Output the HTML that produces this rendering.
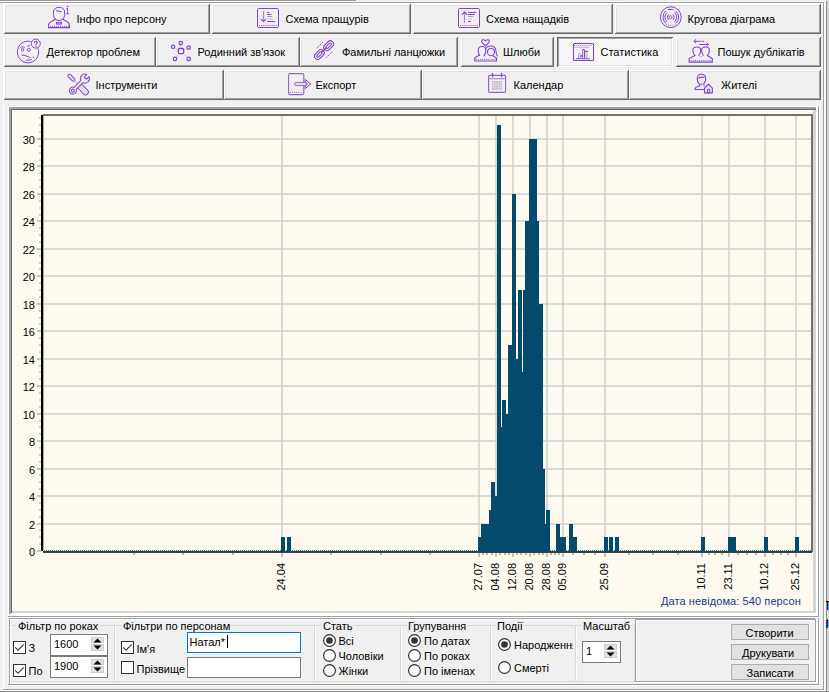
<!DOCTYPE html>
<html><head><meta charset="utf-8"><style>
html,body{margin:0;padding:0;}
body{width:829px;height:692px;overflow:hidden;position:relative;background:#f0f0f0;font-family:"Liberation Sans",sans-serif;font-size:11px;}
body>div, body>svg{position:absolute;}
.t{position:absolute;white-space:nowrap;line-height:12px;font-size:11px;color:#000;}
.b{position:absolute;background:#f0f0f0;box-shadow:inset -1px -1px #696969, inset 1px 1px #fff, inset -2px -2px #a0a0a0, inset 2px 2px #e3e3e3;}
.bs{position:absolute;background-color:#fff;background-image:linear-gradient(45deg,#f0f0f0 25%,transparent 25%,transparent 75%,#f0f0f0 75%),linear-gradient(45deg,#f0f0f0 25%,transparent 25%,transparent 75%,#f0f0f0 75%);background-size:2px 2px;background-position:0 0,1px 1px;box-shadow:inset 1px 1px #696969, inset -1px -1px #fff, inset 2px 2px #a0a0a0, inset -2px -2px #e3e3e3;}
.ic{position:absolute;overflow:visible;}
.cb{position:absolute;width:11px;height:11px;border:1px solid #333;background:#fff;}
.sp{position:absolute;border:1px solid #7a7a7a;background:#fff;}
.ed{position:absolute;border:1px solid #7a7a7a;background:#fff;}
.sb{position:absolute;background:#e1e1e1;box-sizing:border-box;border:1px solid #cfcfcf;}
.fb{position:absolute;background:#e1e1e1;border:1px solid #adadad;}
</style></head><body>
<div style="left:0px;top:0px;width:356px;height:1px;background:#9a9a9a;"></div>
<div style="left:356px;top:0px;width:473px;height:1px;background:#ececec;"></div>
<div style="left:0px;top:1px;width:829px;height:1px;background:#fafafa;"></div>
<div style="left:0px;top:2px;width:824px;height:1px;background:#a0a0a0;"></div>
<div style="left:3px;top:3px;width:821px;height:1px;background:#ffffff;"></div>
<div style="left:3px;top:3px;width:1px;height:688px;background:#ffffff;"></div>
<div style="left:823px;top:2px;width:1px;height:688px;background:#a0a0a0;"></div>
<div style="left:824px;top:2px;width:1px;height:689px;background:#ffffff;"></div>
<div style="left:826px;top:1px;width:1px;height:691px;background:#8c8c8c;"></div>
<div style="left:827px;top:0px;width:2px;height:692px;background:#d8d8d8;"></div>
<div style="left:3px;top:689px;width:821px;height:1px;background:#a0a0a0;"></div>
<div style="left:3px;top:690px;width:822px;height:1px;background:#ffffff;"></div>
<div style="left:0px;top:691px;width:829px;height:1px;background:#8c8c8c;"></div>
<div class="b" style="left:4px;top:4px;width:206px;height:30px"></div>
<svg class="ic" style="left:45px;top:4px" width="30" height="30" viewBox="0 0 30 30"><path d="M10.3 15 C9 13.8 8.5 12.5 8.5 10.5 L8.5 8 C8.5 5 11 3.3 14.2 3.3 C17.4 3.3 19.6 5 19.6 8 L19.6 10.5 C19.6 12.5 19 13.8 17.8 15 C16.7 16 15.4 16.4 14 16.4 C12.6 16.4 11.3 16 10.3 15 Z" fill="none" stroke="#8442d0" stroke-width="1.0" stroke-linecap="round" stroke-linejoin="round" /><path d="M11.5 6.8 L16.3 7.5" fill="none" stroke="#8442d0" stroke-width="1.1" stroke-linecap="round" stroke-linejoin="round" /><path d="M10.3 15.2 C8.5 16.5 5.8 17.3 4.3 19.2 C3.4 20.4 3.4 22 3.4 23.6 L24.6 23.6 C24.6 22 24.6 20.4 23.7 19.2 C22.2 17.3 19.5 16.5 17.8 15.2" fill="none" stroke="#8442d0" stroke-width="1.1" stroke-linecap="round" stroke-linejoin="round" /><rect x="11" y="17.8" width="6" height="2.8" fill="#8442d0"/><rect x="12.5" y="18.6" width="3" height="1.2" fill="#cdb5ef"/><rect x="5.2" y="21.9" width="0.9" height="1.7" fill="#8442d0"/><rect x="7.2" y="21.9" width="0.9" height="1.7" fill="#8442d0"/><rect x="9.2" y="21.9" width="0.9" height="1.7" fill="#8442d0"/><rect x="11.2" y="21.9" width="0.9" height="1.7" fill="#8442d0"/><rect x="13.2" y="21.9" width="0.9" height="1.7" fill="#8442d0"/><rect x="15.2" y="21.9" width="0.9" height="1.7" fill="#8442d0"/><rect x="17.2" y="21.9" width="0.9" height="1.7" fill="#8442d0"/><rect x="19.2" y="21.9" width="0.9" height="1.7" fill="#8442d0"/><rect x="21.2" y="21.9" width="0.9" height="1.7" fill="#8442d0"/><rect x="23.2" y="21.9" width="0.9" height="1.7" fill="#8442d0"/><circle cx="22.6" cy="2.5" r="0.7" fill="#8442d0"/><path d="M22.6 4.6 L22.6 9.6 M21.5 9.8 L23.7 9.8 M21.7 4.6 L22.6 4.6" fill="none" stroke="#8442d0" stroke-width="0.9" stroke-linecap="round" stroke-linejoin="round" /></svg>
<div class="t" style="left:76.5px;top:13px;color:#000;">Інфо про персону</div>
<div class="b" style="left:212px;top:4px;width:199px;height:30px"></div>
<svg class="ic" style="left:254px;top:5px" width="30" height="30" viewBox="0 0 30 30"><rect x="3.5" y="3.5" width="21" height="19" rx="1.2" fill="none" stroke="#8442d0" stroke-width="1"/><path d="M9.5 6.5 L9.5 16.5" fill="none" stroke="#a48ac8" stroke-width="1.2" stroke-linecap="round" stroke-linejoin="round" /><path d="M7.3 14.3 L9.5 16.6 L11.7 14.3" fill="none" stroke="#8442d0" stroke-width="1.2" stroke-linecap="round" stroke-linejoin="round" /><path d="M13.5 7.5 L15 7.5" fill="none" stroke="#8442d0" stroke-width="1.0" stroke-linecap="round" stroke-linejoin="round" /><path d="M13.5 9.5 L17 9.5" fill="none" stroke="#8442d0" stroke-width="1.0" stroke-linecap="round" stroke-linejoin="round" /><path d="M13.5 11.5 L18 11.5" fill="none" stroke="#b69ade" stroke-width="1.0" stroke-linecap="round" stroke-linejoin="round" /><path d="M13.5 14 L19 14" fill="none" stroke="#c8c0d4" stroke-width="1.0" stroke-linecap="round" stroke-linejoin="round" /><path d="M13.5 16.5 L20.5 16.5" fill="none" stroke="#8442d0" stroke-width="1.0" stroke-linecap="round" stroke-linejoin="round" /><circle cx="5.5" cy="20.5" r="0.6" fill="#8442d0"/><circle cx="7.6" cy="20.5" r="0.6" fill="#8442d0"/><circle cx="9.7" cy="20.5" r="0.6" fill="#8442d0"/><circle cx="11.799999999999999" cy="20.5" r="0.6" fill="#8442d0"/><circle cx="13.899999999999999" cy="20.5" r="0.6" fill="#8442d0"/><circle cx="15.999999999999998" cy="20.5" r="0.6" fill="#8442d0"/><circle cx="18.099999999999998" cy="20.5" r="0.6" fill="#8442d0"/><circle cx="20.2" cy="20.5" r="0.6" fill="#8442d0"/><circle cx="22.3" cy="20.5" r="0.6" fill="#8442d0"/></svg>
<div class="t" style="left:285.5px;top:13px;color:#000;">Схема пращурів</div>
<div class="b" style="left:413px;top:4px;width:200px;height:30px"></div>
<svg class="ic" style="left:454px;top:4px" width="30" height="30" viewBox="0 0 30 30"><rect x="4.5" y="4.5" width="21" height="19" rx="1.2" fill="none" stroke="#8442d0" stroke-width="1"/><path d="M10.5 8.5 L10.5 18.5" fill="none" stroke="#a48ac8" stroke-width="1.2" stroke-linecap="round" stroke-linejoin="round" /><path d="M8.2 10.4 L10.5 8 L12.8 10.4" fill="none" stroke="#8442d0" stroke-width="1.2" stroke-linecap="round" stroke-linejoin="round" /><path d="M14.5 8.5 L22 8.5" fill="none" stroke="#8442d0" stroke-width="1.0" stroke-linecap="round" stroke-linejoin="round" /><path d="M14.5 10.5 L20.5 10.5" fill="none" stroke="#8442d0" stroke-width="1.0" stroke-linecap="round" stroke-linejoin="round" /><path d="M14.5 12.5 L19 12.5" fill="none" stroke="#b69ade" stroke-width="1.0" stroke-linecap="round" stroke-linejoin="round" /><path d="M14.5 15 L17.5 15" fill="none" stroke="#c8c0d4" stroke-width="1.0" stroke-linecap="round" stroke-linejoin="round" /><path d="M14.5 17.5 L16.5 17.5" fill="none" stroke="#8442d0" stroke-width="1.0" stroke-linecap="round" stroke-linejoin="round" /><circle cx="6.5" cy="21.5" r="0.6" fill="#8442d0"/><circle cx="8.6" cy="21.5" r="0.6" fill="#8442d0"/><circle cx="10.7" cy="21.5" r="0.6" fill="#8442d0"/><circle cx="12.799999999999999" cy="21.5" r="0.6" fill="#8442d0"/><circle cx="14.899999999999999" cy="21.5" r="0.6" fill="#8442d0"/><circle cx="17.0" cy="21.5" r="0.6" fill="#8442d0"/><circle cx="19.1" cy="21.5" r="0.6" fill="#8442d0"/><circle cx="21.200000000000003" cy="21.5" r="0.6" fill="#8442d0"/><circle cx="23.300000000000004" cy="21.5" r="0.6" fill="#8442d0"/></svg>
<div class="t" style="left:486px;top:13px;color:#000;">Схема нащадків</div>
<div class="b" style="left:615px;top:4px;width:206px;height:30px"></div>
<svg class="ic" style="left:656px;top:4px" width="30" height="30" viewBox="0 0 30 30"><circle cx="14.8" cy="13.2" r="10.4" fill="none" stroke="#8442d0" stroke-width="1"/><path d="M12.3 5.499999999999999 L16.3 5.499999999999999" fill="none" stroke="#8442d0" stroke-width="1.1" stroke-linecap="round" stroke-linejoin="round" /><path d="M17.400000000000002 5.799999999999999 L18.1 6.1" fill="none" stroke="#b69ade" stroke-width="0.9" stroke-linecap="round" stroke-linejoin="round" /><path d="M9.4 7.299999999999999 A8 8 0 0 0 9.4 19.1" fill="none" stroke="#8442d0" stroke-width="1.0" stroke-linecap="round" stroke-linejoin="round" /><path d="M20.200000000000003 7.299999999999999 A8 8 0 0 1 20.200000000000003 19.1" fill="none" stroke="#8442d0" stroke-width="1.0" stroke-linecap="round" stroke-linejoin="round" /><path d="M10.600000000000001 8.899999999999999 A6 6 0 0 0 10.600000000000001 17.5" fill="none" stroke="#8442d0" stroke-width="1.0" stroke-linecap="round" stroke-linejoin="round" /><path d="M19.0 8.899999999999999 A6 6 0 0 1 19.0 17.5" fill="none" stroke="#8442d0" stroke-width="1.0" stroke-linecap="round" stroke-linejoin="round" /><path d="M12.3 10.799999999999999 A3.5 3.5 0 0 0 12.3 15.6" fill="none" stroke="#8442d0" stroke-width="1.0" stroke-linecap="round" stroke-linejoin="round" /><path d="M17.3 10.799999999999999 A3.5 3.5 0 0 1 17.3 15.6" fill="none" stroke="#8442d0" stroke-width="1.0" stroke-linecap="round" stroke-linejoin="round" /><circle cx="14.600000000000001" cy="13.2" r="1.5" fill="none" stroke="#8442d0" stroke-width="0.9"/><circle cx="10.5" cy="20.2" r="0.5" fill="#8442d0"/><circle cx="12.600000000000001" cy="21.2" r="0.5" fill="#8442d0"/><circle cx="14.8" cy="21.5" r="0.5" fill="#8442d0"/><circle cx="17.0" cy="21.2" r="0.5" fill="#8442d0"/><circle cx="19.1" cy="20.2" r="0.5" fill="#8442d0"/></svg>
<div class="t" style="left:687.5px;top:13px;color:#000;">Кругова діаграма</div>
<div class="b" style="left:4px;top:37px;width:152px;height:30px"></div>
<svg class="ic" style="left:14px;top:37px" width="30" height="30" viewBox="0 0 30 30"><path d="M16.6 4.4 C15.8 4.2 14.9 4.2 14 4.2 C8 4.2 3.4 9 3.4 15 C3.4 21 8 25.8 14 25.8 C20 25.8 24.6 21 24.6 15 C24.6 13.8 24.4 12.8 24.1 11.8" fill="none" stroke="#8442d0" stroke-width="1.0" stroke-linecap="round" stroke-linejoin="round" /><circle cx="21.8" cy="6.6" r="4.5" fill="none" stroke="#8442d0" stroke-width="1.0"/><path d="M20.5 5.4 C20.5 3.9 23.2 3.9 23.2 5.3 C23.2 6.3 21.9 6.6 21.9 7.9" fill="none" stroke="#8442d0" stroke-width="1.1" stroke-linecap="round" stroke-linejoin="round" /><circle cx="21.9" cy="9.6" r="0.6" fill="#8442d0"/><ellipse cx="8.5" cy="12.8" rx="1.1" ry="1.7" fill="none" stroke="#8442d0" stroke-width="0.9"/><ellipse cx="14.9" cy="12.8" rx="1.4" ry="1.7" fill="none" stroke="#8442d0" stroke-width="0.9"/><path d="M6.6 10.3 C7.5 9.6 9.5 9.6 10.4 10.3" fill="none" stroke="#8442d0" stroke-width="0.9" stroke-linecap="round" stroke-linejoin="round" /><path d="M13.4 9.4 L15.8 8.1" fill="none" stroke="#8442d0" stroke-width="0.9" stroke-linecap="round" stroke-linejoin="round" /><path d="M7.8 18 C10 18.2 12.5 18.8 14.5 19.8 L16.2 20.6" fill="none" stroke="#8442d0" stroke-width="1.0" stroke-linecap="round" stroke-linejoin="round" /><path d="M12.4 23.2 L16.3 22.9 L17.6 22.3" fill="none" stroke="#8442d0" stroke-width="1.0" stroke-linecap="round" stroke-linejoin="round" /><path d="M19.3 20.4 L19.6 20.1" fill="none" stroke="#8442d0" stroke-width="1.1" stroke-linecap="round" stroke-linejoin="round" /></svg>
<div class="t" style="left:46.5px;top:46px;color:#000;">Детектор проблем</div>
<div class="b" style="left:156px;top:37px;width:144px;height:30px"></div>
<svg class="ic" style="left:166px;top:38px" width="30" height="30" viewBox="0 0 30 30"><path d="M15 10.4 L14.8 6.8 M12.3 11.8 L8.6 9.6 M17.7 11.8 L21.1 10.2 M12.8 15.6 L10.2 19.3 M17.3 15.6 L21.3 19.5" fill="none" stroke="#c8c0d4" stroke-width="0.8" stroke-linecap="round" stroke-linejoin="round" /><rect x="12.4" y="10.5" width="5.2" height="5.2" rx="1.2" fill="none" stroke="#8442d0" stroke-width="1.3"/><circle cx="14.8" cy="5.1" r="1.7" fill="none" stroke="#8442d0" stroke-width="1.2"/><circle cx="7.1" cy="8.8" r="1.7" fill="none" stroke="#8442d0" stroke-width="1.2"/><circle cx="22.7" cy="9.6" r="1.7" fill="none" stroke="#8442d0" stroke-width="1.2"/><circle cx="9" cy="20.9" r="1.7" fill="none" stroke="#8442d0" stroke-width="1.2"/><circle cx="22.7" cy="20.9" r="1.7" fill="none" stroke="#8442d0" stroke-width="1.2"/></svg>
<div class="t" style="left:197.5px;top:46px;color:#000;">Родинний зв'язок</div>
<div class="b" style="left:300px;top:37px;width:158px;height:30px"></div>
<svg class="ic" style="left:310px;top:37px" width="30" height="30" viewBox="0 0 30 30"><g transform="rotate(-45 18.6 8.7)"><rect x="13.1" y="5.5" width="11" height="6.4" rx="3.2" fill="none" stroke="#8442d0" stroke-width="1.1"/><rect x="15.3" y="7.5" width="6.6" height="2.4" rx="1.2" fill="none" stroke="#8442d0" stroke-width="1.0"/></g><g transform="rotate(-45 9.4 17.5)"><rect x="3.9" y="14.3" width="11" height="6.4" rx="3.2" fill="none" stroke="#8442d0" stroke-width="1.1"/><rect x="6.1" y="16.3" width="6.6" height="2.4" rx="1.2" fill="none" stroke="#8442d0" stroke-width="1.0"/></g><path d="M11.6 15.2 L16.4 10.6" fill="none" stroke="#8442d0" stroke-width="1.3" stroke-linecap="round" stroke-linejoin="round" /><path d="M7 11 L7.4 10.6 M8.6 9.4 L9.1 8.9 M10.3 7.7 L10.8 7.2 M12 6 L12.5 5.5" fill="none" stroke="#8442d0" stroke-width="1.0" stroke-linecap="round" stroke-linejoin="round" /><path d="M16.4 20.5 L16.9 20 M18.1 18.9 L18.6 18.4 M19.8 17.2 L20.3 16.7 M21.6 15.6 L22.2 15" fill="none" stroke="#8442d0" stroke-width="1.0" stroke-linecap="round" stroke-linejoin="round" /></svg>
<div class="t" style="left:342px;top:46px;color:#000;">Фамильні ланцюжки</div>
<div class="b" style="left:461px;top:37px;width:93px;height:30px"></div>
<svg class="ic" style="left:472px;top:37px" width="30" height="30" viewBox="0 0 30 30"><path d="M13.5 9 L10.4 5.9 C9.3 4.7 9.5 3.1 11 2.8 C12.1 2.6 13 3.3 13.5 4.1 C14 3.3 14.9 2.6 16 2.8 C17.5 3.1 17.7 4.7 16.6 5.9 Z" fill="none" stroke="#8442d0" stroke-width="1.1" stroke-linecap="round" stroke-linejoin="round" /><path d="M7.6 18.5 C6.7 17.5 6.2 15.5 6.2 13.5 C6.2 11 7.5 9.5 10 9.5 C12.5 9.5 13.8 11 13.8 13.5 C13.8 15.5 13.2 17.3 12 18.8" fill="none" stroke="#8442d0" stroke-width="1.1" stroke-linecap="round" stroke-linejoin="round" /><path d="M15.5 15 C15.5 12.5 17 11.5 19 11.5 C21 11.5 22.5 12.5 22.5 15 C22.5 17 21 18.8 19 18.8 C17 18.8 15.5 17 15.5 15 Z" fill="none" stroke="#8442d0" stroke-width="1.1" stroke-linecap="round" stroke-linejoin="round" /><path d="M13.5 12 C14.5 9.5 17 9 19 9 C22 9 23.5 11 23.8 13.5 C24 16 24.5 18 25.5 19" fill="none" stroke="#8442d0" stroke-width="1.1" stroke-linecap="round" stroke-linejoin="round" /><path d="M7.5 18.3 C5.5 19.3 3.5 19.8 2.8 21 L2.8 24 L24.5 24 L24.5 21 C23.5 20.2 22.5 19.7 21.3 19" fill="none" stroke="#8442d0" stroke-width="1.2" stroke-linecap="round" stroke-linejoin="round" /><circle cx="4.5" cy="22.3" r="0.55" fill="#8442d0"/><circle cx="6.55" cy="22.3" r="0.55" fill="#8442d0"/><circle cx="8.6" cy="22.3" r="0.55" fill="#8442d0"/><circle cx="10.649999999999999" cy="22.3" r="0.55" fill="#8442d0"/><circle cx="12.7" cy="22.3" r="0.55" fill="#8442d0"/><circle cx="14.75" cy="22.3" r="0.55" fill="#8442d0"/><circle cx="16.8" cy="22.3" r="0.55" fill="#8442d0"/><circle cx="18.85" cy="22.3" r="0.55" fill="#8442d0"/><circle cx="20.900000000000002" cy="22.3" r="0.55" fill="#8442d0"/><circle cx="22.950000000000003" cy="22.3" r="0.55" fill="#8442d0"/></svg>
<div class="t" style="left:503px;top:46px;color:#000;">Шлюби</div>
<div class="bs" style="left:557px;top:37px;width:116px;height:30px"></div>
<svg class="ic" style="left:569px;top:38px" width="30" height="30" viewBox="0 0 30 30"><rect x="4.5" y="5.5" width="20" height="17" rx="1" fill="none" stroke="#8442d0" stroke-width="1.1"/><circle cx="5.5" cy="7.3" r="0.55" fill="#8442d0"/><circle cx="7.6" cy="7.3" r="0.55" fill="#8442d0"/><circle cx="9.7" cy="7.3" r="0.55" fill="#8442d0"/><circle cx="11.799999999999999" cy="7.3" r="0.55" fill="#8442d0"/><circle cx="13.899999999999999" cy="7.3" r="0.55" fill="#8442d0"/><circle cx="15.999999999999998" cy="7.3" r="0.55" fill="#8442d0"/><circle cx="18.099999999999998" cy="7.3" r="0.55" fill="#8442d0"/><circle cx="20.2" cy="7.3" r="0.55" fill="#8442d0"/><circle cx="22.3" cy="7.3" r="0.55" fill="#8442d0"/><path d="M5.5 9.2 L20 9.2" fill="none" stroke="#b69ade" stroke-width="0.9" stroke-linecap="round" stroke-linejoin="round" /><path d="M9.5 20 L9.5 15.8 C9.5 15 11.3 15 11.3 15.8 L11.3 20" fill="none" stroke="#b69ade" stroke-width="1.0" stroke-linecap="round" stroke-linejoin="round" /><path d="M13.7 20 L13.7 11.5 L15.5 11.5 L15.5 20" fill="none" stroke="#8442d0" stroke-width="1.0" stroke-linecap="round" stroke-linejoin="round" /><rect x="16.4" y="13.4" width="2.2" height="6.6" fill="#c8c0d4"/><path d="M16.4 13.4 L18.6 13.4" fill="none" stroke="#8442d0" stroke-width="1.0" stroke-linecap="round" stroke-linejoin="round" /><path d="M7.2 20.7 L20.5 20.7" fill="none" stroke="#8442d0" stroke-width="1.1" stroke-linecap="round" stroke-linejoin="round" /><rect x="11.5" y="17.2" width="1.6" height="1.6" fill="#8442d0"/></svg>
<div class="t" style="left:600.5px;top:46px;color:#000;">Статистика</div>
<div class="b" style="left:676px;top:37px;width:145px;height:30px"></div>
<svg class="ic" style="left:686px;top:37px" width="30" height="30" viewBox="0 0 30 30"><path d="M8.2 4.3 L14.5 4.3 M16 4.3 L17.7 4.3 M9.8 2.6 L8 4.3 L9.8 6" fill="none" stroke="#8442d0" stroke-width="1.0" stroke-linecap="round" stroke-linejoin="round" /><path d="M13.5 7.5 L22.3 7.5 M20.6 5.8 L22.3 7.5 L20.6 9.2" fill="none" stroke="#8442d0" stroke-width="1.0" stroke-linecap="round" stroke-linejoin="round" /><path d="M8.8 18.5 C7.5 17 6.9 15 6.9 13 C6.9 11 8.3 10 10.8 10 C13.3 10 14.7 11 14.7 13 C14.7 15 14 17 12.7 18.5" fill="none" stroke="#8442d0" stroke-width="1.1" stroke-linecap="round" stroke-linejoin="round" /><path d="M17.5 18.5 C16.3 17 15.6 15 15.6 13 C15.6 11 17 10 19.5 10 C22 10 23.4 11 23.4 13 C23.4 15 22.7 17 21.4 18.5" fill="none" stroke="#8442d0" stroke-width="1.1" stroke-linecap="round" stroke-linejoin="round" /><path d="M8.8 18.5 C7 19.5 4.8 20.2 3.2 21.6 L3.2 25.2 L26.3 25.2 L26.3 21.6 C24.7 20.2 23 19.5 21.4 18.5" fill="none" stroke="#8442d0" stroke-width="1.2" stroke-linecap="round" stroke-linejoin="round" /><path d="M12.7 18.5 C13.5 19.4 14.4 19.8 15.1 19.6 C16 19.3 16.8 18.8 17.5 18.5" fill="none" stroke="#b69ade" stroke-width="0.9" stroke-linecap="round" stroke-linejoin="round" /><circle cx="5.3" cy="23.6" r="0.55" fill="#8442d0"/><circle cx="7.4" cy="23.6" r="0.55" fill="#8442d0"/><circle cx="9.5" cy="23.6" r="0.55" fill="#8442d0"/><circle cx="11.6" cy="23.6" r="0.55" fill="#8442d0"/><circle cx="13.7" cy="23.6" r="0.55" fill="#8442d0"/><circle cx="15.799999999999999" cy="23.6" r="0.55" fill="#8442d0"/><circle cx="17.9" cy="23.6" r="0.55" fill="#8442d0"/><circle cx="20.0" cy="23.6" r="0.55" fill="#8442d0"/><circle cx="22.1" cy="23.6" r="0.55" fill="#8442d0"/><circle cx="24.200000000000003" cy="23.6" r="0.55" fill="#8442d0"/></svg>
<div class="t" style="left:717.5px;top:46px;color:#000;">Пошук дублікатів</div>
<div class="b" style="left:4px;top:70px;width:220px;height:30px"></div>
<svg class="ic" style="left:64px;top:70px" width="30" height="30" viewBox="0 0 30 30"><g transform="translate(14.2 14.6) rotate(45)"><rect x="-14" y="-1.5" width="8.5" height="3" rx="1.5" fill="none" stroke="#8442d0" stroke-width="1.0"/><path d="M-5.5 0 L1 0" stroke="#c8c0d4" stroke-width="1.6"/><rect x="1.5" y="-2.7" width="11.5" height="5.4" rx="2" fill="none" stroke="#8442d0" stroke-width="1.0"/><path d="M3.5 -1.8 L3.5 1.8" stroke="#c8c0d4" stroke-width="0.8"/><path d="M5.3 -1.8 L5.3 1.8" stroke="#c8c0d4" stroke-width="0.8"/><path d="M7.1 -1.8 L7.1 1.8" stroke="#c8c0d4" stroke-width="0.8"/><path d="M8.9 -1.8 L8.9 1.8" stroke="#c8c0d4" stroke-width="0.8"/><path d="M10.7 -1.8 L10.7 1.8" stroke="#c8c0d4" stroke-width="0.8"/></g><g transform="translate(8.9 20.6) rotate(-45)"><path d="M3.17 -1.5 L12.76 -1.5 A4.5 4.5 0 0 1 21.24 -1.5 L17.6 -1.5 L17.6 1.5 L21.24 1.5 A4.5 4.5 0 0 1 12.76 1.5 L3.17 1.5 A3.5 3.5 0 1 1 3.17 -1.5 Z" fill="#f0f0f0" stroke="#8442d0" stroke-width="1.0" stroke-linejoin="round"/><circle cx="0" cy="0" r="1.5" fill="none" stroke="#8442d0" stroke-width="1.0"/><path d="M4.5 0 L12 0" stroke="#c8c0d4" stroke-width="0.8" stroke-dasharray="1 1"/></g></svg>
<div class="t" style="left:95.5px;top:79px;color:#000;">Інструменти</div>
<div class="b" style="left:224px;top:70px;width:198px;height:30px"></div>
<svg class="ic" style="left:284px;top:70px" width="30" height="30" viewBox="0 0 30 30"><rect x="4.6" y="3.6" width="15.2" height="21" rx="1.5" fill="none" stroke="#9064c8" stroke-width="1.1"/><path d="M21.2 9.4 L26.6 14 L21.2 18.6 L21.2 16 L23.6 14 L21.2 12 Z" fill="#f0f0f0" stroke="#8442d0" stroke-width="1.0" stroke-linejoin="round"/><rect x="10.6" y="12.4" width="11.8" height="3.2" rx="1.6" fill="#f0f0f0" stroke="#9064c8" stroke-width="1.0"/><rect x="11.8" y="13.5" width="10" height="1.1" fill="#cfcfcf"/><circle cx="6.3" cy="22.3" r="0.55" fill="#8442d0"/><circle cx="8.4" cy="22.3" r="0.55" fill="#8442d0"/><circle cx="10.5" cy="22.3" r="0.55" fill="#8442d0"/><circle cx="12.6" cy="22.3" r="0.55" fill="#8442d0"/><circle cx="14.7" cy="22.3" r="0.55" fill="#8442d0"/><circle cx="16.8" cy="22.3" r="0.55" fill="#8442d0"/></svg>
<div class="t" style="left:315.5px;top:79px;color:#000;">Експорт</div>
<div class="b" style="left:422px;top:70px;width:207px;height:30px"></div>
<svg class="ic" style="left:482px;top:70px" width="30" height="30" viewBox="0 0 30 30"><rect x="6.6" y="5.4" width="17" height="17" rx="1.2" fill="none" stroke="#9062c8" stroke-width="1.1"/><path d="M10.5 3.5 L10.5 6.5 M19.5 3.5 L19.5 6.5" fill="none" stroke="#8442d0" stroke-width="1.3" stroke-linecap="round" stroke-linejoin="round" /><path d="M7.3 8.6 L23 8.6" fill="none" stroke="#a890c8" stroke-width="1.1" stroke-linecap="round" stroke-linejoin="round" /><rect x="10" y="11" width="10" height="8.8" fill="#cbc4cf"/><rect x="11.1" y="12.8" width="1" height="1" fill="#f4f2f6"/><rect x="11.1" y="15" width="1" height="1" fill="#f4f2f6"/><rect x="11.1" y="17.2" width="1" height="1" fill="#f4f2f6"/><rect x="13.3" y="12.8" width="1" height="1" fill="#f4f2f6"/><rect x="13.3" y="15" width="1" height="1" fill="#f4f2f6"/><rect x="13.3" y="17.2" width="1" height="1" fill="#f4f2f6"/><rect x="15.9" y="12.8" width="1" height="1" fill="#f4f2f6"/><rect x="15.9" y="15" width="1" height="1" fill="#f4f2f6"/><rect x="15.9" y="17.2" width="1" height="1" fill="#f4f2f6"/><rect x="18.1" y="12.8" width="1" height="1" fill="#f4f2f6"/><rect x="18.1" y="15" width="1" height="1" fill="#f4f2f6"/><rect x="18.1" y="17.2" width="1" height="1" fill="#f4f2f6"/></svg>
<div class="t" style="left:513.5px;top:79px;color:#000;">Календар</div>
<div class="b" style="left:629px;top:70px;width:192px;height:30px"></div>
<svg class="ic" style="left:690px;top:70px" width="30" height="30" viewBox="0 0 30 30"><path d="M8.8 13.3 C7.6 12.2 7.2 10.5 7.2 8.8 C7.2 5.8 9 4.2 11.5 4.2 C14 4.2 15.7 5.8 15.7 8.8 C15.7 10.5 15.2 12.2 14 13.3 C13.2 14 12.4 14.3 11.5 14.3 C10.5 14.3 9.6 14 8.8 13.3 Z" fill="none" stroke="#8442d0" stroke-width="1.1" stroke-linecap="round" stroke-linejoin="round" /><path d="M8.8 8.2 C10 7.3 12 7 14 7.3" fill="none" stroke="#8442d0" stroke-width="1.1" stroke-linecap="round" stroke-linejoin="round" /><circle cx="10.5" cy="11.3" r="0.45" fill="#c8c0d4"/><circle cx="12.8" cy="11.3" r="0.45" fill="#c8c0d4"/><path d="M9.5 14.5 L9.8 15.7 C8 16.5 6 17 5.3 18 L5.3 19.5 L13.5 19.5" fill="none" stroke="#8442d0" stroke-width="1.2" stroke-linecap="round" stroke-linejoin="round" /><path d="M14.2 15 L14 15.8" fill="none" stroke="#8442d0" stroke-width="1.1" stroke-linecap="round" stroke-linejoin="round" /><path d="M14.5 22.8 L14.5 18.2 L18.4 14.2 L22.3 18.2 L22.3 22.8 Z" fill="none" stroke="#8442d0" stroke-width="1.2" stroke-linecap="round" stroke-linejoin="round" /><rect x="17.4" y="19.4" width="2.2" height="3.4" fill="none" stroke="#8442d0" stroke-width="1"/></svg>
<div class="t" style="left:721px;top:79px;color:#000;">Жителі</div>
<div style="left:818px;top:106px;width:1px;height:579px;background:#a0a0a0;"></div>
<div style="left:819px;top:106px;width:1px;height:580px;background:#ffffff;"></div>
<div style="left:8px;top:616px;width:811px;height:1px;background:#a0a0a0;"></div>
<div style="left:8px;top:617px;width:811px;height:1px;background:#ffffff;"></div>
<div style="left:8px;top:684px;width:811px;height:1px;background:#a0a0a0;"></div>
<div style="left:8px;top:685px;width:812px;height:1px;background:#ffffff;"></div>
<div style="left:8px;top:106px;width:810px;height:1px;background:#ffffff;"></div>
<div style="left:8px;top:106px;width:1px;height:510px;background:#ffffff;"></div>
<div style="left:9px;top:107px;width:808px;height:2px;background:#a0a0a0;"></div>
<div style="left:9px;top:107px;width:2px;height:507px;background:#a0a0a0;"></div>
<div style="left:11px;top:109px;width:805px;height:1px;background:#696969;"></div>
<div style="left:11px;top:109px;width:1px;height:504px;background:#696969;"></div>
<div style="left:12px;top:110px;width:801px;height:1px;background:#ffffff;"></div>
<div style="left:12px;top:110px;width:1px;height:501px;background:#ffffff;"></div>
<div style="left:813px;top:110px;width:3px;height:503px;background:#d6d6d4;"></div>
<div style="left:12px;top:611px;width:804px;height:2px;background:#d6d6d4;"></div>
<div style="left:816px;top:107px;width:2px;height:509px;background:#ffffff;"></div>
<div style="left:11px;top:613px;width:807px;height:3px;background:#ffffff;"></div>
<svg style="position:absolute;left:0;top:0" width="829" height="692" shape-rendering="crispEdges">
<rect x="13" y="111" width="800" height="500" fill="#fefaf0"/>
<rect x="43" y="523" width="769" height="2" fill="#dcdad5"/>
<rect x="43" y="495" width="769" height="2" fill="#dcdad5"/>
<rect x="43" y="468" width="769" height="2" fill="#dcdad5"/>
<rect x="43" y="440" width="769" height="2" fill="#dcdad5"/>
<rect x="43" y="413" width="769" height="2" fill="#dcdad5"/>
<rect x="43" y="385" width="769" height="2" fill="#dcdad5"/>
<rect x="43" y="358" width="769" height="2" fill="#dcdad5"/>
<rect x="43" y="330" width="769" height="2" fill="#dcdad5"/>
<rect x="43" y="303" width="769" height="2" fill="#dcdad5"/>
<rect x="43" y="275" width="769" height="2" fill="#dcdad5"/>
<rect x="43" y="248" width="769" height="2" fill="#dcdad5"/>
<rect x="43" y="220" width="769" height="2" fill="#dcdad5"/>
<rect x="43" y="193" width="769" height="2" fill="#dcdad5"/>
<rect x="43" y="165" width="769" height="2" fill="#dcdad5"/>
<rect x="43" y="138" width="769" height="2" fill="#dcdad5"/>
<rect x="281" y="116" width="2" height="435" fill="#dcdad5"/>
<rect x="478" y="116" width="2" height="435" fill="#dcdad5"/>
<rect x="495" y="116" width="2" height="435" fill="#dcdad5"/>
<rect x="512" y="116" width="2" height="435" fill="#dcdad5"/>
<rect x="529" y="116" width="2" height="435" fill="#dcdad5"/>
<rect x="546" y="116" width="2" height="435" fill="#dcdad5"/>
<rect x="562" y="116" width="2" height="435" fill="#dcdad5"/>
<rect x="604" y="116" width="2" height="435" fill="#dcdad5"/>
<rect x="701" y="116" width="2" height="435" fill="#dcdad5"/>
<rect x="728" y="116" width="2" height="435" fill="#dcdad5"/>
<rect x="764" y="116" width="2" height="435" fill="#dcdad5"/>
<rect x="795" y="116" width="2" height="435" fill="#dcdad5"/>
<rect x="281" y="523" width="2" height="2" fill="#d3d1cc"/>
<rect x="478" y="523" width="2" height="2" fill="#d3d1cc"/>
<rect x="495" y="523" width="2" height="2" fill="#d3d1cc"/>
<rect x="512" y="523" width="2" height="2" fill="#d3d1cc"/>
<rect x="529" y="523" width="2" height="2" fill="#d3d1cc"/>
<rect x="546" y="523" width="2" height="2" fill="#d3d1cc"/>
<rect x="562" y="523" width="2" height="2" fill="#d3d1cc"/>
<rect x="604" y="523" width="2" height="2" fill="#d3d1cc"/>
<rect x="701" y="523" width="2" height="2" fill="#d3d1cc"/>
<rect x="728" y="523" width="2" height="2" fill="#d3d1cc"/>
<rect x="764" y="523" width="2" height="2" fill="#d3d1cc"/>
<rect x="795" y="523" width="2" height="2" fill="#d3d1cc"/>
<rect x="281" y="495" width="2" height="2" fill="#d3d1cc"/>
<rect x="478" y="495" width="2" height="2" fill="#d3d1cc"/>
<rect x="495" y="495" width="2" height="2" fill="#d3d1cc"/>
<rect x="512" y="495" width="2" height="2" fill="#d3d1cc"/>
<rect x="529" y="495" width="2" height="2" fill="#d3d1cc"/>
<rect x="546" y="495" width="2" height="2" fill="#d3d1cc"/>
<rect x="562" y="495" width="2" height="2" fill="#d3d1cc"/>
<rect x="604" y="495" width="2" height="2" fill="#d3d1cc"/>
<rect x="701" y="495" width="2" height="2" fill="#d3d1cc"/>
<rect x="728" y="495" width="2" height="2" fill="#d3d1cc"/>
<rect x="764" y="495" width="2" height="2" fill="#d3d1cc"/>
<rect x="795" y="495" width="2" height="2" fill="#d3d1cc"/>
<rect x="281" y="468" width="2" height="2" fill="#d3d1cc"/>
<rect x="478" y="468" width="2" height="2" fill="#d3d1cc"/>
<rect x="495" y="468" width="2" height="2" fill="#d3d1cc"/>
<rect x="512" y="468" width="2" height="2" fill="#d3d1cc"/>
<rect x="529" y="468" width="2" height="2" fill="#d3d1cc"/>
<rect x="546" y="468" width="2" height="2" fill="#d3d1cc"/>
<rect x="562" y="468" width="2" height="2" fill="#d3d1cc"/>
<rect x="604" y="468" width="2" height="2" fill="#d3d1cc"/>
<rect x="701" y="468" width="2" height="2" fill="#d3d1cc"/>
<rect x="728" y="468" width="2" height="2" fill="#d3d1cc"/>
<rect x="764" y="468" width="2" height="2" fill="#d3d1cc"/>
<rect x="795" y="468" width="2" height="2" fill="#d3d1cc"/>
<rect x="281" y="440" width="2" height="2" fill="#d3d1cc"/>
<rect x="478" y="440" width="2" height="2" fill="#d3d1cc"/>
<rect x="495" y="440" width="2" height="2" fill="#d3d1cc"/>
<rect x="512" y="440" width="2" height="2" fill="#d3d1cc"/>
<rect x="529" y="440" width="2" height="2" fill="#d3d1cc"/>
<rect x="546" y="440" width="2" height="2" fill="#d3d1cc"/>
<rect x="562" y="440" width="2" height="2" fill="#d3d1cc"/>
<rect x="604" y="440" width="2" height="2" fill="#d3d1cc"/>
<rect x="701" y="440" width="2" height="2" fill="#d3d1cc"/>
<rect x="728" y="440" width="2" height="2" fill="#d3d1cc"/>
<rect x="764" y="440" width="2" height="2" fill="#d3d1cc"/>
<rect x="795" y="440" width="2" height="2" fill="#d3d1cc"/>
<rect x="281" y="413" width="2" height="2" fill="#d3d1cc"/>
<rect x="478" y="413" width="2" height="2" fill="#d3d1cc"/>
<rect x="495" y="413" width="2" height="2" fill="#d3d1cc"/>
<rect x="512" y="413" width="2" height="2" fill="#d3d1cc"/>
<rect x="529" y="413" width="2" height="2" fill="#d3d1cc"/>
<rect x="546" y="413" width="2" height="2" fill="#d3d1cc"/>
<rect x="562" y="413" width="2" height="2" fill="#d3d1cc"/>
<rect x="604" y="413" width="2" height="2" fill="#d3d1cc"/>
<rect x="701" y="413" width="2" height="2" fill="#d3d1cc"/>
<rect x="728" y="413" width="2" height="2" fill="#d3d1cc"/>
<rect x="764" y="413" width="2" height="2" fill="#d3d1cc"/>
<rect x="795" y="413" width="2" height="2" fill="#d3d1cc"/>
<rect x="281" y="385" width="2" height="2" fill="#d3d1cc"/>
<rect x="478" y="385" width="2" height="2" fill="#d3d1cc"/>
<rect x="495" y="385" width="2" height="2" fill="#d3d1cc"/>
<rect x="512" y="385" width="2" height="2" fill="#d3d1cc"/>
<rect x="529" y="385" width="2" height="2" fill="#d3d1cc"/>
<rect x="546" y="385" width="2" height="2" fill="#d3d1cc"/>
<rect x="562" y="385" width="2" height="2" fill="#d3d1cc"/>
<rect x="604" y="385" width="2" height="2" fill="#d3d1cc"/>
<rect x="701" y="385" width="2" height="2" fill="#d3d1cc"/>
<rect x="728" y="385" width="2" height="2" fill="#d3d1cc"/>
<rect x="764" y="385" width="2" height="2" fill="#d3d1cc"/>
<rect x="795" y="385" width="2" height="2" fill="#d3d1cc"/>
<rect x="281" y="358" width="2" height="2" fill="#d3d1cc"/>
<rect x="478" y="358" width="2" height="2" fill="#d3d1cc"/>
<rect x="495" y="358" width="2" height="2" fill="#d3d1cc"/>
<rect x="512" y="358" width="2" height="2" fill="#d3d1cc"/>
<rect x="529" y="358" width="2" height="2" fill="#d3d1cc"/>
<rect x="546" y="358" width="2" height="2" fill="#d3d1cc"/>
<rect x="562" y="358" width="2" height="2" fill="#d3d1cc"/>
<rect x="604" y="358" width="2" height="2" fill="#d3d1cc"/>
<rect x="701" y="358" width="2" height="2" fill="#d3d1cc"/>
<rect x="728" y="358" width="2" height="2" fill="#d3d1cc"/>
<rect x="764" y="358" width="2" height="2" fill="#d3d1cc"/>
<rect x="795" y="358" width="2" height="2" fill="#d3d1cc"/>
<rect x="281" y="330" width="2" height="2" fill="#d3d1cc"/>
<rect x="478" y="330" width="2" height="2" fill="#d3d1cc"/>
<rect x="495" y="330" width="2" height="2" fill="#d3d1cc"/>
<rect x="512" y="330" width="2" height="2" fill="#d3d1cc"/>
<rect x="529" y="330" width="2" height="2" fill="#d3d1cc"/>
<rect x="546" y="330" width="2" height="2" fill="#d3d1cc"/>
<rect x="562" y="330" width="2" height="2" fill="#d3d1cc"/>
<rect x="604" y="330" width="2" height="2" fill="#d3d1cc"/>
<rect x="701" y="330" width="2" height="2" fill="#d3d1cc"/>
<rect x="728" y="330" width="2" height="2" fill="#d3d1cc"/>
<rect x="764" y="330" width="2" height="2" fill="#d3d1cc"/>
<rect x="795" y="330" width="2" height="2" fill="#d3d1cc"/>
<rect x="281" y="303" width="2" height="2" fill="#d3d1cc"/>
<rect x="478" y="303" width="2" height="2" fill="#d3d1cc"/>
<rect x="495" y="303" width="2" height="2" fill="#d3d1cc"/>
<rect x="512" y="303" width="2" height="2" fill="#d3d1cc"/>
<rect x="529" y="303" width="2" height="2" fill="#d3d1cc"/>
<rect x="546" y="303" width="2" height="2" fill="#d3d1cc"/>
<rect x="562" y="303" width="2" height="2" fill="#d3d1cc"/>
<rect x="604" y="303" width="2" height="2" fill="#d3d1cc"/>
<rect x="701" y="303" width="2" height="2" fill="#d3d1cc"/>
<rect x="728" y="303" width="2" height="2" fill="#d3d1cc"/>
<rect x="764" y="303" width="2" height="2" fill="#d3d1cc"/>
<rect x="795" y="303" width="2" height="2" fill="#d3d1cc"/>
<rect x="281" y="275" width="2" height="2" fill="#d3d1cc"/>
<rect x="478" y="275" width="2" height="2" fill="#d3d1cc"/>
<rect x="495" y="275" width="2" height="2" fill="#d3d1cc"/>
<rect x="512" y="275" width="2" height="2" fill="#d3d1cc"/>
<rect x="529" y="275" width="2" height="2" fill="#d3d1cc"/>
<rect x="546" y="275" width="2" height="2" fill="#d3d1cc"/>
<rect x="562" y="275" width="2" height="2" fill="#d3d1cc"/>
<rect x="604" y="275" width="2" height="2" fill="#d3d1cc"/>
<rect x="701" y="275" width="2" height="2" fill="#d3d1cc"/>
<rect x="728" y="275" width="2" height="2" fill="#d3d1cc"/>
<rect x="764" y="275" width="2" height="2" fill="#d3d1cc"/>
<rect x="795" y="275" width="2" height="2" fill="#d3d1cc"/>
<rect x="281" y="248" width="2" height="2" fill="#d3d1cc"/>
<rect x="478" y="248" width="2" height="2" fill="#d3d1cc"/>
<rect x="495" y="248" width="2" height="2" fill="#d3d1cc"/>
<rect x="512" y="248" width="2" height="2" fill="#d3d1cc"/>
<rect x="529" y="248" width="2" height="2" fill="#d3d1cc"/>
<rect x="546" y="248" width="2" height="2" fill="#d3d1cc"/>
<rect x="562" y="248" width="2" height="2" fill="#d3d1cc"/>
<rect x="604" y="248" width="2" height="2" fill="#d3d1cc"/>
<rect x="701" y="248" width="2" height="2" fill="#d3d1cc"/>
<rect x="728" y="248" width="2" height="2" fill="#d3d1cc"/>
<rect x="764" y="248" width="2" height="2" fill="#d3d1cc"/>
<rect x="795" y="248" width="2" height="2" fill="#d3d1cc"/>
<rect x="281" y="220" width="2" height="2" fill="#d3d1cc"/>
<rect x="478" y="220" width="2" height="2" fill="#d3d1cc"/>
<rect x="495" y="220" width="2" height="2" fill="#d3d1cc"/>
<rect x="512" y="220" width="2" height="2" fill="#d3d1cc"/>
<rect x="529" y="220" width="2" height="2" fill="#d3d1cc"/>
<rect x="546" y="220" width="2" height="2" fill="#d3d1cc"/>
<rect x="562" y="220" width="2" height="2" fill="#d3d1cc"/>
<rect x="604" y="220" width="2" height="2" fill="#d3d1cc"/>
<rect x="701" y="220" width="2" height="2" fill="#d3d1cc"/>
<rect x="728" y="220" width="2" height="2" fill="#d3d1cc"/>
<rect x="764" y="220" width="2" height="2" fill="#d3d1cc"/>
<rect x="795" y="220" width="2" height="2" fill="#d3d1cc"/>
<rect x="281" y="193" width="2" height="2" fill="#d3d1cc"/>
<rect x="478" y="193" width="2" height="2" fill="#d3d1cc"/>
<rect x="495" y="193" width="2" height="2" fill="#d3d1cc"/>
<rect x="512" y="193" width="2" height="2" fill="#d3d1cc"/>
<rect x="529" y="193" width="2" height="2" fill="#d3d1cc"/>
<rect x="546" y="193" width="2" height="2" fill="#d3d1cc"/>
<rect x="562" y="193" width="2" height="2" fill="#d3d1cc"/>
<rect x="604" y="193" width="2" height="2" fill="#d3d1cc"/>
<rect x="701" y="193" width="2" height="2" fill="#d3d1cc"/>
<rect x="728" y="193" width="2" height="2" fill="#d3d1cc"/>
<rect x="764" y="193" width="2" height="2" fill="#d3d1cc"/>
<rect x="795" y="193" width="2" height="2" fill="#d3d1cc"/>
<rect x="281" y="165" width="2" height="2" fill="#d3d1cc"/>
<rect x="478" y="165" width="2" height="2" fill="#d3d1cc"/>
<rect x="495" y="165" width="2" height="2" fill="#d3d1cc"/>
<rect x="512" y="165" width="2" height="2" fill="#d3d1cc"/>
<rect x="529" y="165" width="2" height="2" fill="#d3d1cc"/>
<rect x="546" y="165" width="2" height="2" fill="#d3d1cc"/>
<rect x="562" y="165" width="2" height="2" fill="#d3d1cc"/>
<rect x="604" y="165" width="2" height="2" fill="#d3d1cc"/>
<rect x="701" y="165" width="2" height="2" fill="#d3d1cc"/>
<rect x="728" y="165" width="2" height="2" fill="#d3d1cc"/>
<rect x="764" y="165" width="2" height="2" fill="#d3d1cc"/>
<rect x="795" y="165" width="2" height="2" fill="#d3d1cc"/>
<rect x="281" y="138" width="2" height="2" fill="#d3d1cc"/>
<rect x="478" y="138" width="2" height="2" fill="#d3d1cc"/>
<rect x="495" y="138" width="2" height="2" fill="#d3d1cc"/>
<rect x="512" y="138" width="2" height="2" fill="#d3d1cc"/>
<rect x="529" y="138" width="2" height="2" fill="#d3d1cc"/>
<rect x="546" y="138" width="2" height="2" fill="#d3d1cc"/>
<rect x="562" y="138" width="2" height="2" fill="#d3d1cc"/>
<rect x="604" y="138" width="2" height="2" fill="#d3d1cc"/>
<rect x="701" y="138" width="2" height="2" fill="#d3d1cc"/>
<rect x="728" y="138" width="2" height="2" fill="#d3d1cc"/>
<rect x="764" y="138" width="2" height="2" fill="#d3d1cc"/>
<rect x="795" y="138" width="2" height="2" fill="#d3d1cc"/>
<rect x="43" y="114" width="770" height="2" fill="#727270"/>
<rect x="811" y="114" width="2" height="438" fill="#727270"/>
<rect x="281" y="537" width="4" height="14" fill="#034a6d"/>
<rect x="287" y="537" width="4" height="14" fill="#034a6d"/>
<rect x="478" y="537" width="3" height="14" fill="#034a6d"/>
<rect x="481" y="524" width="8" height="27" fill="#034a6d"/>
<rect x="489" y="510" width="2" height="41" fill="#034a6d"/>
<rect x="491" y="482" width="4" height="69" fill="#034a6d"/>
<rect x="495" y="496" width="2" height="55" fill="#034a6d"/>
<rect x="497" y="125" width="4" height="426" fill="#034a6d"/>
<rect x="501" y="427" width="1" height="124" fill="#034a6d"/>
<rect x="502" y="400" width="4" height="151" fill="#034a6d"/>
<rect x="506" y="414" width="2" height="137" fill="#034a6d"/>
<rect x="508" y="345" width="4" height="206" fill="#034a6d"/>
<rect x="512" y="194" width="4" height="357" fill="#034a6d"/>
<rect x="516" y="359" width="2" height="192" fill="#034a6d"/>
<rect x="518" y="290" width="4" height="261" fill="#034a6d"/>
<rect x="522" y="372" width="1" height="179" fill="#034a6d"/>
<rect x="523" y="290" width="2" height="261" fill="#034a6d"/>
<rect x="525" y="221" width="4" height="330" fill="#034a6d"/>
<rect x="529" y="139" width="8" height="412" fill="#034a6d"/>
<rect x="537" y="221" width="2" height="330" fill="#034a6d"/>
<rect x="539" y="304" width="4" height="247" fill="#034a6d"/>
<rect x="543" y="469" width="2" height="82" fill="#034a6d"/>
<rect x="545" y="524" width="1" height="27" fill="#034a6d"/>
<rect x="546" y="510" width="4" height="41" fill="#034a6d"/>
<rect x="556" y="524" width="4" height="27" fill="#034a6d"/>
<rect x="560" y="537" width="6" height="14" fill="#034a6d"/>
<rect x="569" y="524" width="4" height="27" fill="#034a6d"/>
<rect x="573" y="537" width="4" height="14" fill="#034a6d"/>
<rect x="604" y="537" width="4" height="14" fill="#034a6d"/>
<rect x="609" y="537" width="4" height="14" fill="#034a6d"/>
<rect x="615" y="537" width="4" height="14" fill="#034a6d"/>
<rect x="701" y="537" width="4" height="14" fill="#034a6d"/>
<rect x="728" y="537" width="8" height="14" fill="#034a6d"/>
<rect x="764" y="537" width="4" height="14" fill="#034a6d"/>
<rect x="795" y="537" width="4" height="14" fill="#034a6d"/>
<rect x="43" y="551" width="769" height="1" fill="#034a6d"/>
<rect x="43" y="552" width="769" height="1" fill="#4a4038"/>
<pattern id="dots" x="0" y="0" width="2" height="1" patternUnits="userSpaceOnUse"><rect x="0" y="0" width="1" height="1" fill="#6a6a64"/></pattern>
<rect x="43" y="550" width="238" height="1" fill="url(#dots)"/>
<rect x="285" y="550" width="2" height="1" fill="url(#dots)"/>
<rect x="291" y="550" width="187" height="1" fill="url(#dots)"/>
<rect x="550" y="550" width="6" height="1" fill="url(#dots)"/>
<rect x="566" y="550" width="3" height="1" fill="url(#dots)"/>
<rect x="577" y="550" width="27" height="1" fill="url(#dots)"/>
<rect x="608" y="550" width="1" height="1" fill="url(#dots)"/>
<rect x="613" y="550" width="2" height="1" fill="url(#dots)"/>
<rect x="619" y="550" width="82" height="1" fill="url(#dots)"/>
<rect x="705" y="550" width="23" height="1" fill="url(#dots)"/>
<rect x="736" y="550" width="28" height="1" fill="url(#dots)"/>
<rect x="768" y="550" width="27" height="1" fill="url(#dots)"/>
<rect x="799" y="550" width="13" height="1" fill="url(#dots)"/>
<rect x="41" y="115" width="2" height="436" fill="#000"/>
<rect x="43" y="116" width="1" height="434" fill="#a8a8a4"/>
<rect x="37" y="550" width="4" height="2" fill="#c4c4c0"/>
<rect x="39" y="543" width="2" height="2" fill="#cdcdc8"/>
<rect x="39" y="536" width="2" height="2" fill="#cdcdc8"/>
<rect x="39" y="529" width="2" height="2" fill="#cdcdc8"/>
<rect x="37" y="523" width="4" height="2" fill="#c4c4c0"/>
<rect x="39" y="516" width="2" height="2" fill="#cdcdc8"/>
<rect x="39" y="509" width="2" height="2" fill="#cdcdc8"/>
<rect x="39" y="502" width="2" height="2" fill="#cdcdc8"/>
<rect x="37" y="495" width="4" height="2" fill="#c4c4c0"/>
<rect x="39" y="488" width="2" height="2" fill="#cdcdc8"/>
<rect x="39" y="481" width="2" height="2" fill="#cdcdc8"/>
<rect x="39" y="474" width="2" height="2" fill="#cdcdc8"/>
<rect x="37" y="468" width="4" height="2" fill="#c4c4c0"/>
<rect x="39" y="461" width="2" height="2" fill="#cdcdc8"/>
<rect x="39" y="454" width="2" height="2" fill="#cdcdc8"/>
<rect x="39" y="447" width="2" height="2" fill="#cdcdc8"/>
<rect x="37" y="440" width="4" height="2" fill="#c4c4c0"/>
<rect x="39" y="433" width="2" height="2" fill="#cdcdc8"/>
<rect x="39" y="426" width="2" height="2" fill="#cdcdc8"/>
<rect x="39" y="420" width="2" height="2" fill="#cdcdc8"/>
<rect x="37" y="413" width="4" height="2" fill="#c4c4c0"/>
<rect x="39" y="406" width="2" height="2" fill="#cdcdc8"/>
<rect x="39" y="399" width="2" height="2" fill="#cdcdc8"/>
<rect x="39" y="392" width="2" height="2" fill="#cdcdc8"/>
<rect x="37" y="385" width="4" height="2" fill="#c4c4c0"/>
<rect x="39" y="378" width="2" height="2" fill="#cdcdc8"/>
<rect x="39" y="371" width="2" height="2" fill="#cdcdc8"/>
<rect x="39" y="365" width="2" height="2" fill="#cdcdc8"/>
<rect x="37" y="358" width="4" height="2" fill="#c4c4c0"/>
<rect x="39" y="351" width="2" height="2" fill="#cdcdc8"/>
<rect x="39" y="344" width="2" height="2" fill="#cdcdc8"/>
<rect x="39" y="337" width="2" height="2" fill="#cdcdc8"/>
<rect x="37" y="330" width="4" height="2" fill="#c4c4c0"/>
<rect x="39" y="323" width="2" height="2" fill="#cdcdc8"/>
<rect x="39" y="317" width="2" height="2" fill="#cdcdc8"/>
<rect x="39" y="310" width="2" height="2" fill="#cdcdc8"/>
<rect x="37" y="303" width="4" height="2" fill="#c4c4c0"/>
<rect x="39" y="296" width="2" height="2" fill="#cdcdc8"/>
<rect x="39" y="289" width="2" height="2" fill="#cdcdc8"/>
<rect x="39" y="282" width="2" height="2" fill="#cdcdc8"/>
<rect x="37" y="275" width="4" height="2" fill="#c4c4c0"/>
<rect x="39" y="268" width="2" height="2" fill="#cdcdc8"/>
<rect x="39" y="262" width="2" height="2" fill="#cdcdc8"/>
<rect x="39" y="255" width="2" height="2" fill="#cdcdc8"/>
<rect x="37" y="248" width="4" height="2" fill="#c4c4c0"/>
<rect x="39" y="241" width="2" height="2" fill="#cdcdc8"/>
<rect x="39" y="234" width="2" height="2" fill="#cdcdc8"/>
<rect x="39" y="227" width="2" height="2" fill="#cdcdc8"/>
<rect x="37" y="220" width="4" height="2" fill="#c4c4c0"/>
<rect x="39" y="214" width="2" height="2" fill="#cdcdc8"/>
<rect x="39" y="207" width="2" height="2" fill="#cdcdc8"/>
<rect x="39" y="200" width="2" height="2" fill="#cdcdc8"/>
<rect x="37" y="193" width="4" height="2" fill="#c4c4c0"/>
<rect x="39" y="186" width="2" height="2" fill="#cdcdc8"/>
<rect x="39" y="179" width="2" height="2" fill="#cdcdc8"/>
<rect x="39" y="172" width="2" height="2" fill="#cdcdc8"/>
<rect x="37" y="165" width="4" height="2" fill="#c4c4c0"/>
<rect x="39" y="159" width="2" height="2" fill="#cdcdc8"/>
<rect x="39" y="152" width="2" height="2" fill="#cdcdc8"/>
<rect x="39" y="145" width="2" height="2" fill="#cdcdc8"/>
<rect x="37" y="138" width="4" height="2" fill="#c4c4c0"/>
<rect x="39" y="131" width="2" height="2" fill="#cdcdc8"/>
<rect x="39" y="124" width="2" height="2" fill="#cdcdc8"/>
<rect x="39" y="117" width="2" height="2" fill="#cdcdc8"/>
<rect x="281" y="553" width="2" height="4" fill="#c4c4c0"/>
<rect x="478" y="553" width="2" height="4" fill="#c4c4c0"/>
<rect x="495" y="553" width="2" height="4" fill="#c4c4c0"/>
<rect x="512" y="553" width="2" height="4" fill="#c4c4c0"/>
<rect x="529" y="553" width="2" height="4" fill="#c4c4c0"/>
<rect x="546" y="553" width="2" height="4" fill="#c4c4c0"/>
<rect x="562" y="553" width="2" height="4" fill="#c4c4c0"/>
<rect x="604" y="553" width="2" height="4" fill="#c4c4c0"/>
<rect x="701" y="553" width="2" height="4" fill="#c4c4c0"/>
<rect x="728" y="553" width="2" height="4" fill="#c4c4c0"/>
<rect x="764" y="553" width="2" height="4" fill="#c4c4c0"/>
<rect x="795" y="553" width="2" height="4" fill="#c4c4c0"/>
<rect x="133" y="553" width="2" height="2" fill="#b8b8b4"/>
<rect x="182" y="553" width="2" height="2" fill="#b8b8b4"/>
<rect x="232" y="553" width="2" height="2" fill="#b8b8b4"/>
<rect x="330" y="553" width="2" height="2" fill="#b8b8b4"/>
<rect x="380" y="553" width="2" height="2" fill="#b8b8b4"/>
<rect x="429" y="553" width="2" height="2" fill="#b8b8b4"/>
<rect x="482" y="553" width="2" height="2" fill="#b8b8b4"/>
<rect x="486" y="553" width="2" height="2" fill="#b8b8b4"/>
<rect x="491" y="553" width="2" height="2" fill="#b8b8b4"/>
<rect x="499" y="553" width="2" height="2" fill="#b8b8b4"/>
<rect x="504" y="553" width="2" height="2" fill="#b8b8b4"/>
<rect x="508" y="553" width="2" height="2" fill="#b8b8b4"/>
<rect x="516" y="553" width="2" height="2" fill="#b8b8b4"/>
<rect x="520" y="553" width="2" height="2" fill="#b8b8b4"/>
<rect x="525" y="553" width="2" height="2" fill="#b8b8b4"/>
<rect x="533" y="553" width="2" height="2" fill="#b8b8b4"/>
<rect x="538" y="553" width="2" height="2" fill="#b8b8b4"/>
<rect x="542" y="553" width="2" height="2" fill="#b8b8b4"/>
<rect x="550" y="553" width="2" height="2" fill="#b8b8b4"/>
<rect x="554" y="553" width="2" height="2" fill="#b8b8b4"/>
<rect x="558" y="553" width="2" height="2" fill="#b8b8b4"/>
<rect x="572" y="553" width="2" height="2" fill="#b8b8b4"/>
<rect x="583" y="553" width="2" height="2" fill="#b8b8b4"/>
<rect x="594" y="553" width="2" height="2" fill="#b8b8b4"/>
<rect x="628" y="553" width="2" height="2" fill="#b8b8b4"/>
<rect x="652" y="553" width="2" height="2" fill="#b8b8b4"/>
<rect x="677" y="553" width="2" height="2" fill="#b8b8b4"/>
<rect x="708" y="553" width="2" height="2" fill="#b8b8b4"/>
<rect x="714" y="553" width="2" height="2" fill="#b8b8b4"/>
<rect x="721" y="553" width="2" height="2" fill="#b8b8b4"/>
<rect x="737" y="553" width="2" height="2" fill="#b8b8b4"/>
<rect x="746" y="553" width="2" height="2" fill="#b8b8b4"/>
<rect x="755" y="553" width="2" height="2" fill="#b8b8b4"/>
<rect x="772" y="553" width="2" height="2" fill="#b8b8b4"/>
<rect x="780" y="553" width="2" height="2" fill="#b8b8b4"/>
<rect x="787" y="553" width="2" height="2" fill="#b8b8b4"/>
</svg>
<div class="t" style="left:0px;width:35px;text-align:right;top:546px">0</div>
<div class="t" style="left:0px;width:35px;text-align:right;top:519px">2</div>
<div class="t" style="left:0px;width:35px;text-align:right;top:491px">4</div>
<div class="t" style="left:0px;width:35px;text-align:right;top:464px">6</div>
<div class="t" style="left:0px;width:35px;text-align:right;top:436px">8</div>
<div class="t" style="left:0px;width:35px;text-align:right;top:409px">10</div>
<div class="t" style="left:0px;width:35px;text-align:right;top:381px">12</div>
<div class="t" style="left:0px;width:35px;text-align:right;top:354px">14</div>
<div class="t" style="left:0px;width:35px;text-align:right;top:326px">16</div>
<div class="t" style="left:0px;width:35px;text-align:right;top:299px">18</div>
<div class="t" style="left:0px;width:35px;text-align:right;top:271px">20</div>
<div class="t" style="left:0px;width:35px;text-align:right;top:244px">22</div>
<div class="t" style="left:0px;width:35px;text-align:right;top:216px">24</div>
<div class="t" style="left:0px;width:35px;text-align:right;top:189px">26</div>
<div class="t" style="left:0px;width:35px;text-align:right;top:161px">28</div>
<div class="t" style="left:0px;width:35px;text-align:right;top:134px">30</div>
<div class="t rot" style="left:241.2px;top:557px;width:40px;text-align:right;transform-origin:40px 6px;transform:rotate(-90deg)">24.04</div>
<div class="t rot" style="left:438.2px;top:557px;width:40px;text-align:right;transform-origin:40px 6px;transform:rotate(-90deg)">27.07</div>
<div class="t rot" style="left:455.2px;top:557px;width:40px;text-align:right;transform-origin:40px 6px;transform:rotate(-90deg)">04.08</div>
<div class="t rot" style="left:472.20000000000005px;top:557px;width:40px;text-align:right;transform-origin:40px 6px;transform:rotate(-90deg)">12.08</div>
<div class="t rot" style="left:489.20000000000005px;top:557px;width:40px;text-align:right;transform-origin:40px 6px;transform:rotate(-90deg)">20.08</div>
<div class="t rot" style="left:506.20000000000005px;top:557px;width:40px;text-align:right;transform-origin:40px 6px;transform:rotate(-90deg)">28.08</div>
<div class="t rot" style="left:522.2px;top:557px;width:40px;text-align:right;transform-origin:40px 6px;transform:rotate(-90deg)">05.09</div>
<div class="t rot" style="left:564.2px;top:557px;width:40px;text-align:right;transform-origin:40px 6px;transform:rotate(-90deg)">25.09</div>
<div class="t rot" style="left:661.2px;top:557px;width:40px;text-align:right;transform-origin:40px 6px;transform:rotate(-90deg)">10.11</div>
<div class="t rot" style="left:688.2px;top:557px;width:40px;text-align:right;transform-origin:40px 6px;transform:rotate(-90deg)">23.11</div>
<div class="t rot" style="left:724.2px;top:557px;width:40px;text-align:right;transform-origin:40px 6px;transform:rotate(-90deg)">10.12</div>
<div class="t rot" style="left:755.2px;top:557px;width:40px;text-align:right;transform-origin:40px 6px;transform:rotate(-90deg)">25.12</div>
<div class="t" style="left:661px;top:595.4px;color:#1d3a8a;letter-spacing:0.09px">Дата невідома: 540 персон</div>
<div style="left:9px;top:618px;width:806px;height:1px;background:#a0a0a0;"></div>
<div style="left:9px;top:618px;width:1px;height:66px;background:#a0a0a0;"></div>
<div style="left:10px;top:619px;width:805px;height:1px;background:#ffffff;"></div>
<div style="left:10px;top:619px;width:1px;height:65px;background:#ffffff;"></div>
<div style="left:11px;top:625px;width:624px;height:1px;background:#dcd9d2;"></div>
<div style="left:11px;top:681px;width:624px;height:1px;background:#dcd9d2;"></div>
<div style="left:114px;top:625px;width:1px;height:57px;background:#dcd9d2;"></div>
<div style="left:115px;top:626px;width:1px;height:55px;background:#ffffff;"></div>
<div style="left:314px;top:625px;width:1px;height:57px;background:#dcd9d2;"></div>
<div style="left:315px;top:626px;width:1px;height:55px;background:#ffffff;"></div>
<div style="left:400px;top:625px;width:1px;height:57px;background:#dcd9d2;"></div>
<div style="left:401px;top:626px;width:1px;height:55px;background:#ffffff;"></div>
<div style="left:490px;top:625px;width:1px;height:57px;background:#dcd9d2;"></div>
<div style="left:491px;top:626px;width:1px;height:55px;background:#ffffff;"></div>
<div style="left:575px;top:625px;width:1px;height:57px;background:#dcd9d2;"></div>
<div style="left:576px;top:626px;width:1px;height:55px;background:#ffffff;"></div>
<div style="left:634px;top:625px;width:1px;height:57px;background:#dcd9d2;"></div>
<div style="left:635px;top:626px;width:1px;height:55px;background:#ffffff;"></div>
<div class="t" style="left:17px;top:620px;padding:0 1px;background:#f0f0f0">Фільтр по роках</div>
<div class="t" style="left:122px;top:620px;padding:0 1px;background:#f0f0f0">Фільтри по персонам</div>
<div class="t" style="left:322px;top:620px;padding:0 1px;background:#f0f0f0">Стать</div>
<div class="t" style="left:407px;top:620px;padding:0 1px;background:#f0f0f0">Групування</div>
<div class="t" style="left:496px;top:620px;padding:0 1px;background:#f0f0f0">Події</div>
<div class="t" style="left:582px;top:620px;padding:0 1px;background:#f0f0f0">Масштаб</div>
<div class="cb" style="left:13px;top:641px"><svg width="13" height="13" viewBox="0 0 13 13" style="position:absolute;left:-1px;top:-1px"><path d="M2.2 6.4 L5 9.2 L10.8 3.4" stroke="#3a3a3a" stroke-width="1.1" fill="none"/></svg></div>
<div class="t" style="left:28.5px;top:642px;color:#000;">З</div>
<div class="cb" style="left:13px;top:664px"><svg width="13" height="13" viewBox="0 0 13 13" style="position:absolute;left:-1px;top:-1px"><path d="M2.2 6.4 L5 9.2 L10.8 3.4" stroke="#3a3a3a" stroke-width="1.1" fill="none"/></svg></div>
<div class="t" style="left:28.5px;top:665px;color:#000;">По</div>
<div class="sp" style="left:50px;top:634px;width:56px;height:20px"></div>
<div class="t" style="left:54px;top:638px;color:#000;">1600</div>
<div class="sb" style="left:91px;top:637px;width:13px;height:6px"></div>
<div class="sb" style="left:91px;top:644px;width:13px;height:7px"></div>
<svg class="ic" style="left:91px;top:637px" width="13" height="14"><path d="M2.5 5.5 L6.5 1.5 L10.5 5.5 Z M2.5 8.5 L10.5 8.5 L6.5 12.5 Z" fill="#000"/></svg>
<div class="sp" style="left:50px;top:656px;width:56px;height:20px"></div>
<div class="t" style="left:54px;top:660px;color:#000;">1900</div>
<div class="sb" style="left:91px;top:659px;width:13px;height:6px"></div>
<div class="sb" style="left:91px;top:666px;width:13px;height:7px"></div>
<svg class="ic" style="left:91px;top:659px" width="13" height="14"><path d="M2.5 5.5 L6.5 1.5 L10.5 5.5 Z M2.5 8.5 L10.5 8.5 L6.5 12.5 Z" fill="#000"/></svg>
<div class="cb" style="left:121px;top:641px"><svg width="13" height="13" viewBox="0 0 13 13" style="position:absolute;left:-1px;top:-1px"><path d="M2.2 6.4 L5 9.2 L10.8 3.4" stroke="#3a3a3a" stroke-width="1.1" fill="none"/></svg></div>
<div class="t" style="left:136.5px;top:643px;color:#000;">Ім'я</div>
<div class="cb" style="left:121px;top:661px"></div>
<div class="t" style="left:136.5px;top:663px;color:#000;">Прізвище</div>
<div class="ed" style="left:187px;top:632px;width:112px;height:19px;border-color:#0078d7"></div>
<div class="t" style="left:189.5px;top:636px;color:#000;">Натал*</div>
<div style="left:227px;top:635px;width:1px;height:13px;background:#000;"></div>
<div class="ed" style="left:187px;top:657px;width:112px;height:19px"></div>
<svg class="ic" style="left:323px;top:634px" width="14" height="14"><circle cx="6.5" cy="6.5" r="5.9" fill="#fff" stroke="#333" stroke-width="1.2"/><circle cx="6.5" cy="6.5" r="3.3" fill="#333"/></svg>
<div class="t" style="left:338.5px;top:635px;color:#000;">Всі</div>
<svg class="ic" style="left:323px;top:649px" width="14" height="14"><circle cx="6.5" cy="6.5" r="5.9" fill="#fff" stroke="#333" stroke-width="1.2"/></svg>
<div class="t" style="left:338.5px;top:650px;color:#000;">Чоловіки</div>
<svg class="ic" style="left:323px;top:664px" width="14" height="14"><circle cx="6.5" cy="6.5" r="5.9" fill="#fff" stroke="#333" stroke-width="1.2"/></svg>
<div class="t" style="left:338.5px;top:665px;color:#000;">Жінки</div>
<svg class="ic" style="left:408px;top:634px" width="14" height="14"><circle cx="6.5" cy="6.5" r="5.9" fill="#fff" stroke="#333" stroke-width="1.2"/><circle cx="6.5" cy="6.5" r="3.3" fill="#333"/></svg>
<div class="t" style="left:424px;top:635px;color:#000;">По датах</div>
<svg class="ic" style="left:408px;top:649px" width="14" height="14"><circle cx="6.5" cy="6.5" r="5.9" fill="#fff" stroke="#333" stroke-width="1.2"/></svg>
<div class="t" style="left:424px;top:650px;color:#000;">По роках</div>
<svg class="ic" style="left:408px;top:664px" width="14" height="14"><circle cx="6.5" cy="6.5" r="5.9" fill="#fff" stroke="#333" stroke-width="1.2"/></svg>
<div class="t" style="left:424px;top:665px;color:#000;">По іменах</div>
<svg class="ic" style="left:498px;top:638px" width="14" height="14"><circle cx="6.5" cy="6.5" r="5.9" fill="#fff" stroke="#333" stroke-width="1.2"/><circle cx="6.5" cy="6.5" r="3.3" fill="#333"/></svg>
<div style="left:514px;top:639px;width:59px;height:14px;overflow:hidden"><div class="t" style="left:0;top:0">Народження</div></div>
<svg class="ic" style="left:498px;top:661px" width="14" height="14"><circle cx="6.5" cy="6.5" r="5.9" fill="#fff" stroke="#333" stroke-width="1.2"/></svg>
<div class="t" style="left:514px;top:662px;color:#000;">Смерті</div>
<div class="sp" style="left:582px;top:641px;width:37px;height:20px"></div>
<div class="t" style="left:586px;top:645px;color:#000;">1</div>
<div class="sb" style="left:604px;top:644px;width:13px;height:6px"></div>
<div class="sb" style="left:604px;top:651px;width:13px;height:7px"></div>
<svg class="ic" style="left:604px;top:644px" width="13" height="14"><path d="M2.5 5.5 L6.5 1.5 L10.5 5.5 Z M2.5 8.5 L10.5 8.5 L6.5 12.5 Z" fill="#000"/></svg>
<div style="left:635px;top:619px;width:181px;height:1px;background:#a0a0a0;"></div>
<div style="left:635px;top:619px;width:1px;height:63px;background:#a0a0a0;"></div>
<div style="left:636px;top:620px;width:179px;height:1px;background:#ffffff;"></div>
<div style="left:636px;top:620px;width:1px;height:61px;background:#ffffff;"></div>
<div style="left:815px;top:619px;width:1px;height:63px;background:#a0a0a0;"></div>
<div style="left:635px;top:681px;width:181px;height:1px;background:#a0a0a0;"></div>
<div style="left:816px;top:619px;width:2px;height:64px;background:#ffffff;"></div>
<div style="left:635px;top:682px;width:183px;height:1px;background:#ffffff;"></div>
<div class="fb" style="left:731px;top:624px;width:76px;height:14px"></div>
<div class="t" style="left:745.5px;top:627px;color:#000;">Створити</div>
<div class="fb" style="left:731px;top:644px;width:76px;height:14px"></div>
<div class="t" style="left:742px;top:647px;color:#000;">Друкувати</div>
<div class="fb" style="left:731px;top:664px;width:76px;height:14px"></div>
<div class="t" style="left:746.5px;top:667px;color:#000;">Записати</div>
<div style="left:826px;top:601px;width:3px;height:1px;background:#000;"></div>
<div style="left:827px;top:602px;width:1px;height:8px;background:#5a1010;"></div>
<div style="left:828px;top:602px;width:1px;height:8px;background:#4a9ae0;"></div>
<div style="left:826px;top:620px;width:1px;height:8px;background:#303868;"></div>
<div style="left:827px;top:619px;width:1px;height:9px;background:#1a2a70;"></div>
<div style="left:828px;top:620px;width:1px;height:6px;background:#6ab0e8;"></div>
</body></html>
